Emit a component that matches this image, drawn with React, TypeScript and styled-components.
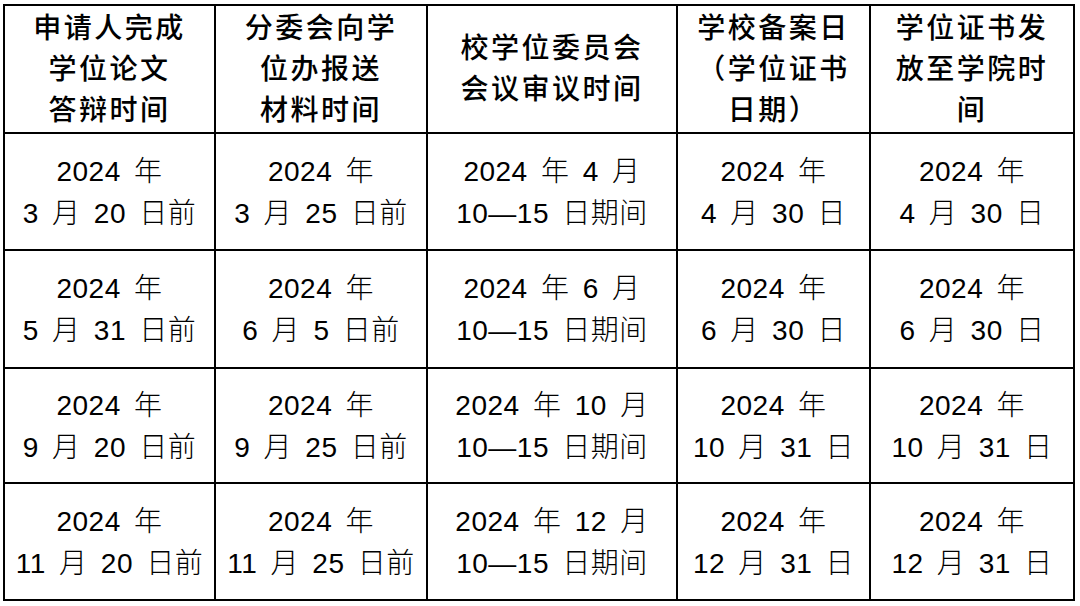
import React from 'react';
import styled, { createGlobalStyle } from 'styled-components';

const GlobalStyle = createGlobalStyle`
  html, body {
    margin: 0;
    padding: 0;
    background: #fff;
  }
`;

const Page = styled.div`
  padding: 4px 0 0 3px;
  width: 1080px;
  height: 606px;
  box-sizing: border-box;
  overflow: hidden;
`;

const Table = styled.table`
  border-collapse: collapse;
  table-layout: fixed;
  border: 2px solid #000;
  color: #000;
`;

const Cell = styled.td<{ $head?: boolean }>`
  border: 2px solid #000;
  padding: 0;
  text-align: center;
  vertical-align: middle;
  font-family: 'Liberation Sans', 'Noto Sans CJK SC', sans-serif;
  font-size: 28px;
  font-weight: ${(p) => (p.$head ? 500 : 300)};
  letter-spacing: ${(p) => (p.$head ? '2.5px' : '0.5px')};
  word-spacing: ${(p) => (p.$head ? '0' : '5px')};
  line-height: ${(p) => (p.$head ? '41px' : '42px')};
  white-space: pre;
`;

const Line = styled.div<{ $offset?: number }>`
  position: relative;
  top: ${(p) => p.$offset ?? 0}px;
`;

const widths = [211, 212, 250, 193, 204];
const heights = [128, 117, 118, 115, 117];

const headers: string[][] = [
  ['申请人完成', '学位论文', '答辩时间'],
  ['分委会向学', '位办报送', '材料时间'],
  ['校学位委员会', '会议审议时间'],
  ['学校备案日', '（学位证书', '日期）'],
  ['学位证书发', '放至学院时', '间'],
];

const rows: string[][][] = [
  [
    ['2024 年', '3 月 20 日前'],
    ['2024 年', '3 月 25 日前'],
    ['2024 年 4 月', '10—15 日期间'],
    ['2024 年', '4 月 30 日'],
    ['2024 年', '4 月 30 日'],
  ],
  [
    ['2024 年', '5 月 31 日前'],
    ['2024 年', '6 月 5 日前'],
    ['2024 年 6 月', '10—15 日期间'],
    ['2024 年', '6 月 30 日'],
    ['2024 年', '6 月 30 日'],
  ],
  [
    ['2024 年', '9 月 20 日前'],
    ['2024 年', '9 月 25 日前'],
    ['2024 年 10 月', '10—15 日期间'],
    ['2024 年', '10 月 31 日'],
    ['2024 年', '10 月 31 日'],
  ],
  [
    ['2024 年', '11 月 20 日前'],
    ['2024 年', '11 月 25 日前'],
    ['2024 年 12 月', '10—15 日期间'],
    ['2024 年', '12 月 31 日'],
    ['2024 年', '12 月 31 日'],
  ],
];

const App: React.FC = () => {
  return (
    <Page>
      <GlobalStyle />
      <Table>
        <colgroup>
          {widths.map((w, i) => (
            <col key={i} style={{ width: w }} />
          ))}
        </colgroup>
        <tbody>
          <tr style={{ height: heights[0] }}>
            {headers.map((lines, i) => (
              <Cell key={i} $head>
                {lines.map((l, j) => (
                  <Line key={j}>{l}</Line>
                ))}
              </Cell>
            ))}
          </tr>
          {rows.map((row, r) => (
            <tr key={r} style={{ height: heights[r + 1] }}>
              {row.map((lines, i) => (
                <Cell key={i}>
                  {lines.map((l, j) => (
                    <Line key={j} $offset={1}>{l}</Line>
                  ))}
                </Cell>
              ))}
            </tr>
          ))}
        </tbody>
      </Table>
    </Page>
  );
};

export default App;
